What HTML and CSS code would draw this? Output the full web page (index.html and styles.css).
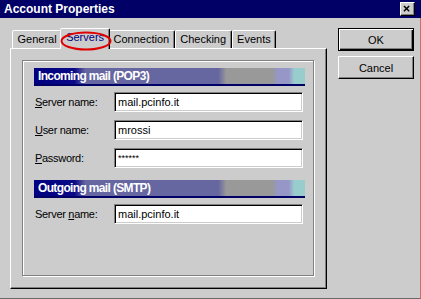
FILE: index.html
```html
<!DOCTYPE html>
<html lang="en">
<head>
    <meta charset="UTF-8">
    <title>Account Properties</title>
    <link rel="stylesheet" href="styles.css">
</head>
<body>
    <div class="window">
        <div class="titlebar">
            <span class="title">Account Properties</span>
            <button class="close" aria-label="Close">
                <svg width="16" height="14" viewBox="0 0 16 14" aria-hidden="true">
                    <path d="M4.5 3.5l6 6m0-6l-6 6" stroke="#000" stroke-width="1.7" fill="none"/>
                </svg>
            </button>
        </div>

        <div class="body">
            <div class="sheet">
                <div class="tabs">
                    <div class="tab">General</div>
                    <div class="tab active">Servers
                        <svg class="mark" width="52" height="24" viewBox="0 0 52 24" aria-hidden="true">
                            <ellipse cx="26" cy="13" rx="24.5" ry="8.5" fill="none" stroke="#e00000" stroke-width="2"/>
                        </svg>
                    </div>
                    <div class="tab">Connection</div>
                    <div class="tab">Checking</div>
                    <div class="tab">Events</div>
                </div>

                <div class="page">
                    <div class="group">
                        <div class="bar">Incoming mail (POP3)</div>
                        <div class="row first">
                            <label><u>S</u>erver name:</label>
                            <div class="field">mail.pcinfo.it</div>
                        </div>
                        <div class="row">
                            <label><u>U</u>ser name:</label>
                            <div class="field">mrossi</div>
                        </div>
                        <div class="row">
                            <label><u>P</u>assword:</label>
                            <div class="field secret">******</div>
                        </div>

                        <div class="bar outgoing">Outgoing mail (SMTP)</div>
                        <div class="row first">
                            <label>Server <u>n</u>ame:</label>
                            <div class="field">mail.pcinfo.it</div>
                        </div>
                    </div>
                </div>
            </div>

            <div class="buttons">
                <button class="btn default">OK</button>
                <button class="btn">Cancel</button>
            </div>
        </div>
    </div>
</body>
</html>
```

FILE: styles.css
```css
body {
    margin: 0;
    font-family: "Liberation Sans", Arial, sans-serif;
    font-size: 11px;
    color: #000;
}

.window {
    width: 421px;
    height: 299px;
    background-color: #cccccc;
    display: flex;
    flex-direction: column;
}

/* title bar */
.titlebar {
    height: 18px;
    flex-shrink: 0;
    background-color: #000066;
    display: flex;
    align-items: flex-start;
    justify-content: space-between;
    padding: 0 6px 0 4px;
}

.title {
    color: white;
    font-weight: bold;
    font-size: 12px;
    line-height: 18px;
}

.close {
    margin-top: 2px;
    width: 15px;
    height: 14px;
    padding: 0;
    background-color: #cccccc;
    border: 1px solid;
    border-color: #fff #000 #000 #fff;
    box-shadow: inset -1px -1px 0 #808080;
    display: flex;
}

.close svg {
    margin: -1px 0 0 -1px;
}

/* dialog body */
.body {
    flex: 1;
    display: flex;
    padding: 10px 6px 0 10px;
    border-right: 1px solid #d46a6a;
    border-bottom: 1px solid #6a6a6a;
}

.sheet {
    width: 317px;
    display: flex;
    flex-direction: column;
}

.tabs {
    height: 20px;
    display: flex;
    align-items: flex-start;
    padding-left: 2px;
    position: relative;
    z-index: 1;
}

.tab {
    margin-top: 2px;
    height: 18px;
    box-sizing: border-box;
    padding: 0 4.5px;
    border: 1px solid;
    border-bottom: none;
    border-color: #fff #000 transparent #fff;
    border-radius: 2px 2px 0 0;
    box-shadow: inset -1px 0 0 #808080;
    background-color: #cccccc;
    line-height: 17px;
}

.tab.active {
    margin: 0 -2px;
    height: 21px;
    padding: 0 5px 3px;
    color: #000080;
    position: relative;
    z-index: 2;
}

.mark {
    position: absolute;
    left: -1px;
    top: -1px;
    overflow: visible;
}

.page {
    height: 241px;
    box-sizing: border-box;
    border: 1px solid;
    border-color: #fff #000 #000 #fff;
    box-shadow: inset -1px -1px 0 #808080;
    padding: 11px 10px 10px 11px;
}

/* etched group */
.group {
    width: 292px;
    height: 216px;
    box-sizing: border-box;
    border: 1px solid #808080;
    box-shadow: 1px 1px 0 #fff, inset 1px 1px 0 #fff;
    padding: 7px 8px 0 11px;
}

.bar {
    width: 271px;
    height: 18px;
    box-sizing: border-box;
    padding-left: 4px;
    border-bottom: 2px solid #000066;
    background: linear-gradient(to right,
        #000080 0%, #0a0a88 15%, #6666a0 19%, #6666a0 68%,
        #999999 71%, #999999 88%, #9696c8 90%, #9696c8 94%,
        #99cccc 96%, #99cccc 100%);
    color: white;
    font-weight: bold;
    font-size: 12px;
    letter-spacing: -0.65px;
    line-height: 16px;
}

.bar.outgoing {
    margin-top: 12px;
}

.row {
    display: flex;
    align-items: center;
    height: 20px;
    margin-top: 8px;
}

.row.first {
    margin-top: 6px;
}

.row label {
    width: 79px;
    padding-left: 1px;
    letter-spacing: -0.3px;
}

.field {
    width: 189px;
    height: 20px;
    box-sizing: border-box;
    border: 1px solid;
    border-color: #808080 #fff #fff #808080;
    box-shadow: inset 1px 1px 0 #000, inset -1px -1px 0 #cccccc;
    background-color: white;
    padding-left: 3px;
    line-height: 18px;
}

.field.secret {
    font-size: 9px;
}

/* buttons */
.buttons {
    margin-left: 11px;
    display: flex;
    flex-direction: column;
    gap: 5px;
}

.btn {
    width: 76px;
    height: 23px;
    padding: 0;
    font-family: "Liberation Sans", Arial, sans-serif;
    font-size: 11px;
    color: #000;
    background-color: #cccccc;
    border: 1px solid;
    border-color: #fff #000 #000 #fff;
    box-shadow: inset -1px -1px 0 #808080;
}

.btn.default {
    border-color: #000;
    box-shadow: inset 1px 1px 0 #fff, inset -1px -1px 0 #000, inset -2px -2px 0 #808080;
}
```
